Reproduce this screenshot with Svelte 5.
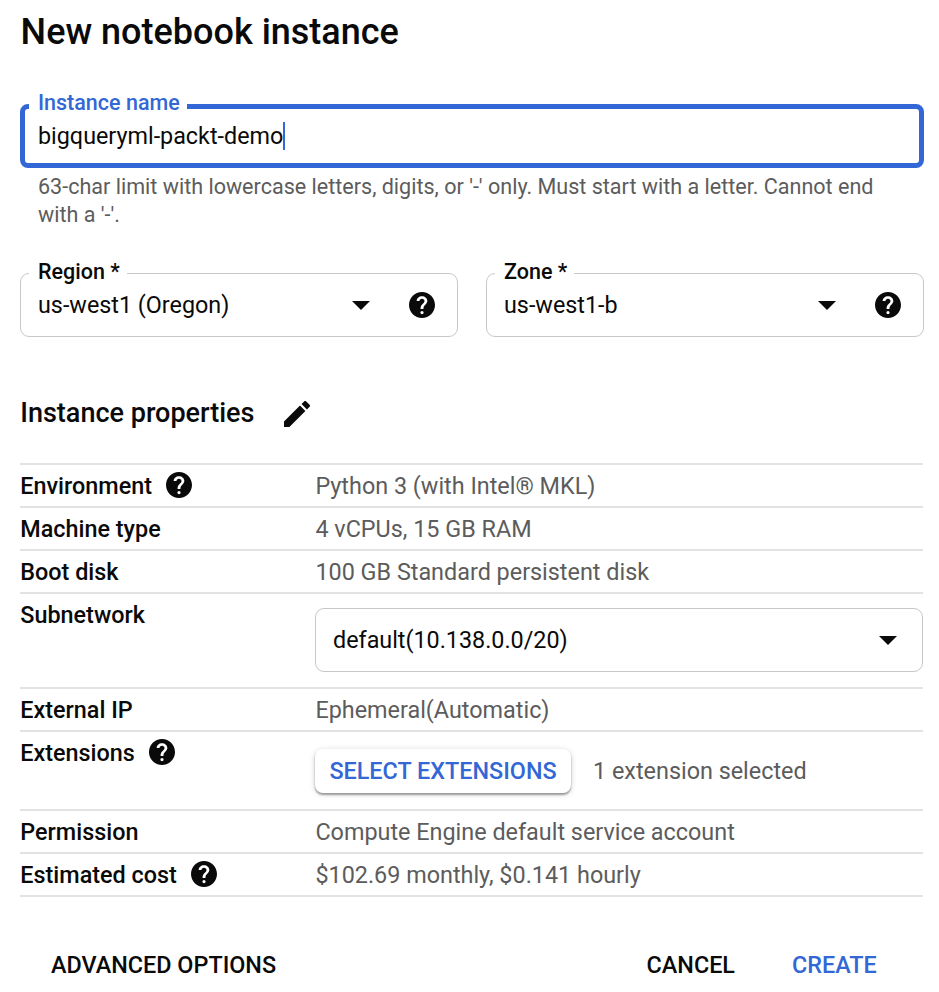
<script>
  let name = $state('bigqueryml-packt-demo');

  const location = [
    { label: 'Region *', value: 'us-west1 (Oregon)', cls: 'region' },
    { label: 'Zone *', value: 'us-west1-b', cls: 'zone' }
  ];

  const properties = [
    { label: 'Environment', help: true, value: 'Python 3 (with Intel® MKL)', cls: 'env' },
    { label: 'Machine type', value: '4 vCPUs, 15 GB RAM', cls: 'machine' },
    { label: 'Boot disk', value: '100 GB Standard persistent disk', cls: 'disk' },
    { label: 'Subnetwork', kind: 'select', value: 'default(10.138.0.0/20)', cls: 'subnet' },
    { label: 'External IP', value: 'Ephemeral(Automatic)', cls: 'ip' },
    { label: 'Extensions', help: true, kind: 'extensions', value: '1 extension selected', cls: 'ext' },
    { label: 'Permission', value: 'Compute Engine default service account', cls: 'perm' },
    { label: 'Estimated cost', help: true, value: '$102.69 monthly, $0.141 hourly', cls: 'cost' }
  ];
</script>

{#snippet help()}
  <svg class="help" viewBox="2 2 20 20" aria-hidden="true">
    <path d="M12 2C6.48 2 2 6.48 2 12s4.48 10 10 10 10-4.48 10-10S17.52 2 12 2zm0 17.1a1.25 1.25 0 1 1 0-2.5 1.25 1.25 0 0 1 0 2.5zm3.07-7.85l-.9.92C13.45 12.9 13.1 13.5 13.1 15h-2.2v-.5c0-1.1.45-2.1 1.17-2.83l1.34-1.36c.37-.36.49-.76.49-1.31 0-1.1-.8-1.8-1.9-1.8s-1.9.7-1.9 1.8H7.9c0-2.1 1.79-3.7 4.1-3.7s4.1 1.6 4.1 3.7c0 .88-.46 1.68-1.03 2.25z" />
  </svg>
{/snippet}

{#snippet arrow()}
  <svg class="arrow" viewBox="0 0 18 9" aria-hidden="true"><path d="M0 0h18L9 9z" /></svg>
{/snippet}

<main>
  <h1><span>New notebook instance</span></h1>

  <div class="field focused">
    <span class="float">Instance name</span>
    <span class="value">{name}</span><i class="caret"></i>
  </div>
  <p class="hint">
    <span class="hint1">63-char limit with lowercase letters, digits, or '-' only. Must start with a letter. Cannot end</span><br />
    <span>with a '-'.</span>
  </p>

  <div class="location">
    {#each location as item}
      <div class="field {item.cls}">
        <span class="float">{item.label}</span>
        <span class="value">{item.value}</span>
        {@render arrow()}
        {@render help()}
      </div>
    {/each}
  </div>

  <h2>
    <span>Instance properties</span>
    <svg class="pencil" viewBox="3 3 18 18" aria-hidden="true">
      <path d="M3 17.25V21h3.75L17.81 9.94l-3.75-3.75L3 17.25zM20.71 7.04c.39-.39.39-1.02 0-1.41l-2.34-2.34c-.39-.39-1.02-.39-1.41 0l-1.83 1.83 3.75 3.75 1.83-1.83z" />
    </svg>
  </h2>

  <dl>
    {#each properties as row}
      <div class="row {row.cls}">
        <dt>
          <span>{row.label}</span>
          {#if row.help}{@render help()}{/if}
        </dt>
        <dd>
          {#if row.kind === 'select'}
            <div class="field">
              <span class="value">{row.value}</span>
              {@render arrow()}
            </div>
          {:else if row.kind === 'extensions'}
            <button class="raised"><span>SELECT EXTENSIONS</span></button>
            <span>{row.value}</span>
          {:else}
            <span>{row.value}</span>
          {/if}
        </dd>
      </div>
    {/each}
  </dl>

  <footer>
    <button class="advanced">ADVANCED OPTIONS</button>
    <button class="cancel">CANCEL</button>
    <button class="create">CREATE</button>
  </footer>
</main>

<style>
  :global(body) {
    margin: 0;
    background: #fff;
  }
  main {
    box-sizing: border-box;
    width: 939px;
    height: 992px;
    overflow: hidden;
    padding: 12px 15px 0 20px;
    font: 400 23.38px/28px Roboto, sans-serif;
    color: #0a0a0a;
    white-space: nowrap;
  }
  svg {
    display: block;
    flex: none;
    fill: #0a0a0a;
  }
  button {
    border: 0;
    padding: 0;
    background: none;
    color: inherit;
    font: inherit;
    font-weight: 500;
  }
  h1 {
    margin: 0 0 52px;
    padding-left: 0.6px;
    font-size: 36px;
    line-height: 40px;
    font-weight: 500;
  }
  .field {
    position: relative;
    box-sizing: border-box;
    display: flex;
    align-items: center;
    height: 64px;
    padding: 0 22px 0 17px;
    border: 1px solid #c8c8c8;
    border-radius: 9px;
    color: #0a0a0a;
  }
  .focused {
    padding: 0 13px;
    border: 5px solid #3367d6;
    border-radius: 8px;
  }
  .float {
    position: absolute;
    top: -16px;
    left: 8px;
    padding: 0 7px 0 9px;
    background: #fff;
    font-size: 21.5px;
    font-weight: 500;
  }
  .focused .float {
    top: -20px;
    left: 4px;
    color: #3367d6;
  }
  .caret {
    width: 2px;
    height: 28px;
    background: #3367d6;
  }
  .value {
    flex: none;
    font-size: 23.34px;
  }
  .arrow {
    width: 18px;
    height: 9px;
    margin-left: auto;
  }
  .help {
    width: 26px;
    height: 26px;
  }
  .field .help {
    margin-left: 39px;
    margin-top: -1px;
  }
  .hint {
    margin: 5px 0 0 18px;
    font-size: 21.56px;
    line-height: 28px;
    color: #5c5c5c;
  }
  .location {
    display: grid;
    grid-template-columns: 1fr 1fr;
    gap: 28px;
    margin-top: 44px;
  }
  h2 {
    display: flex;
    align-items: center;
    gap: 30px;
    margin: 60px 0 0;
    padding-left: 0.3px;
    font-size: 27px;
    line-height: 32px;
    font-weight: 500;
  }
  .pencil {
    width: 26px;
    height: 26px;
    margin-top: 2px;
  }
  dl {
    margin: 34px 1px 0 0;
    border-top: 2px solid #e2e2e2;
  }
  .row {
    box-sizing: border-box;
    display: grid;
    grid-template-columns: 295px 1fr;
    height: 43px;
    padding-top: 7px;
    border-bottom: 2px solid #e2e2e2;
  }
  .subnet {
    height: 95px;
  }
  .ext {
    height: 79px;
  }
  dt {
    display: flex;
    gap: 14.4px;
    height: 28px;
    padding-left: 0.3px;
    font-weight: 500;
  }
  dd {
    margin: 0;
    padding-left: 0.4px;
    color: #5c5c5c;
  }
  .subnet dd {
    padding: 7px 0 0;
  }
  .subnet .field {
    padding-right: 25px;
  }
  .ext dd {
    display: flex;
    align-items: center;
    gap: 22px;
    height: 44px;
    padding: 10px 0 0;
  }
  .raised {
    width: 256px;
    height: 44px;
    border-radius: 8px;
    background: #fff;
    color: #3367d6;
    box-shadow: 0 2px 2px rgba(0, 0, 0, 0.34), 0 1px 6px rgba(0, 0, 0, 0.16);
  }
  footer {
    display: flex;
    margin: 54px 47.3px 0 31px;
  }
  .cancel {
    margin-left: auto;
  }
  .create {
    margin-left: 57px;
    color: #3367d6;
  }
</style>
